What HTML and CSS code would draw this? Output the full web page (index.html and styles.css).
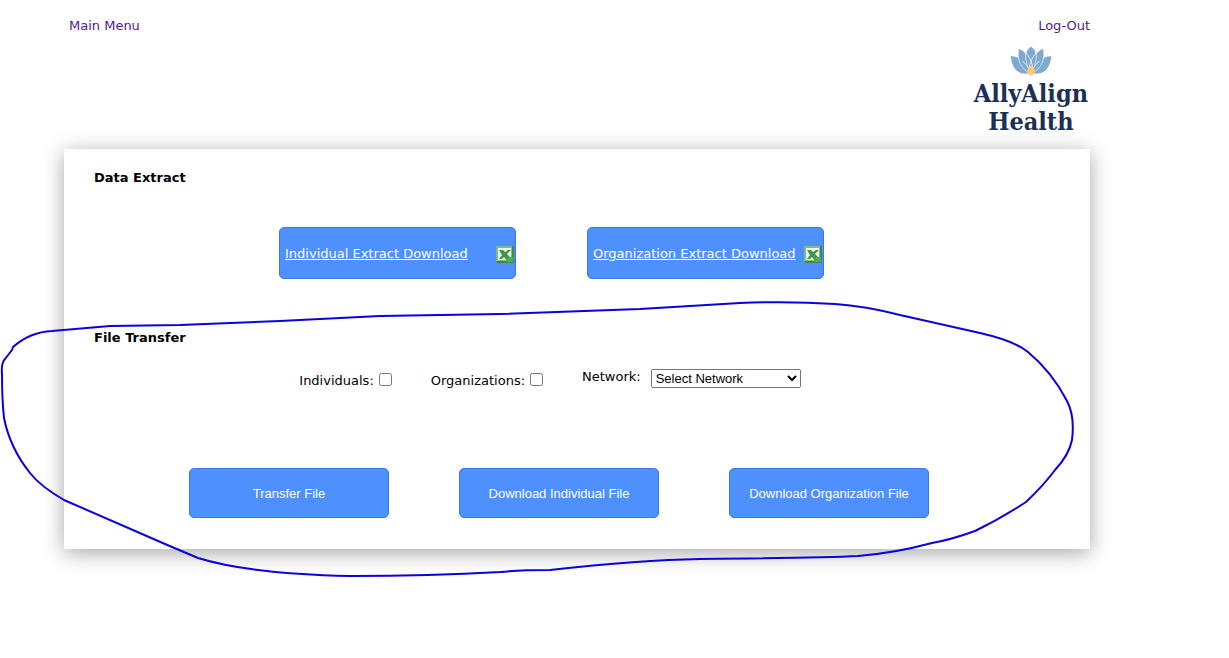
FILE: index.html
```html
<!DOCTYPE html>
<html lang="en">
<head>
<meta charset="utf-8">
<title>Data Extract</title>
<link rel="stylesheet" href="styles.css">
</head>
<body>
<div class="page">
  <header class="header">
    <a class="nav-link" href="#">Main Menu</a>
    <div class="account">
      <a class="nav-link" href="#">Log-Out</a>
      <div class="logo">
        <svg class="lotus" viewBox="0 0 40 28" aria-hidden="true">
          <g fill="#7fa9cf" stroke="#fff" stroke-width="0.6">
            <path d="M0 9Q9 9 14 16Q18 21 19 26Q9 28 4 21Q1 16 0 9Z"/>
            <path d="M40 9Q31 9 26 16Q22 21 21 26Q31 28 36 21Q39 16 40 9Z"/>
            <path d="M8 2Q15 4 18 12Q20 19 19 26Q12 22 9 15Q7 9 8 2Z"/>
            <path d="M32 2Q25 4 22 12Q20 19 21 26Q28 22 31 15Q33 9 32 2Z"/>
            <path d="M20 0Q26 4 25 12Q24 20 20 25Q16 20 15 12Q14 4 20 0Z"/>
          </g>
          <path d="M14 5Q21 12 22 23M26 5Q19 12 18 23M12 14Q17 18 19 24M28 14Q23 18 21 24" fill="none" stroke="#fff" stroke-width="0.7"/>
          <path d="M20 18Q25 22 23 26Q20 30 17 26Q15 22 20 18Z" fill="#fbcb75"/>
        </svg>
        <span>AllyAlign</span>
        <span>Health</span>
      </div>
    </div>
  </header>

  <main class="card">
    <section>
      <h2 class="title">Data Extract</h2>
      <div class="extracts">
        <a class="tile extract" href="#"><span>Individual Extract Download</span>
          <svg class="excel" viewBox="0 0 18 18" aria-hidden="true"><use href="#excel"/></svg></a>
        <a class="tile extract" href="#"><span>Organization Extract Download</span>
          <svg class="excel" viewBox="0 0 18 18" aria-hidden="true"><use href="#excel"/></svg></a>
      </div>
    </section>
    <section>
      <h2 class="title">File Transfer</h2>
      <form class="transfer">
        <div class="options">
          <div class="choice"><label for="ind">Individuals:</label><input class="check" type="checkbox" id="ind"></div>
          <div class="choice"><label for="org">Organizations:</label><input class="check" type="checkbox" id="org"></div>
          <div class="network"><label for="net">Network:</label><select class="select" id="net"><option>Select Network</option></select></div>
        </div>
        <div class="actions">
          <button class="tile action" type="button">Transfer File</button>
          <button class="tile action" type="button">Download Individual File</button>
          <button class="tile action" type="button">Download Organization File</button>
        </div>
      </form>
    </section>
  </main>
</div>

<svg class="markup" width="1229" height="658" viewBox="0 0 1229 658" aria-hidden="true">
  <path d="M2 375Q1 363 5 359L12 350L13 347Q30 332 52 331L110 326L180 325L280 321L380 316L500 314L640 309L740 303Q790 301 835 304Q865 306 900 315L980 333Q1015 341 1028 352Q1052 372 1067 401Q1075 416 1072 440Q1069 455 1055 470Q1043 486 1026 502Q1000 519 975 531Q950 540 932 543Q895 553 858 556Q820 558 700 559Q640 560 550 570Q520 570 500 572Q430 576 350 576Q250 574 198 558L165 544L64 500Q40 486 30 473Q10 448 4 418Q2 400 2 373"/>
</svg>

<svg class="symbols" aria-hidden="true">
  <symbol id="excel" viewBox="0 0 18 18">
    <path d="M0 1H18V18H1Z" fill="#3d8752"/>
    <path d="M0 1H16V16H0Z" fill="#86b886"/>
    <path d="M2 3H15V15H2Z" fill="#f4faed"/>
    <path d="M3 5H7L9 7L12 5H15L11 9L15 13V16H11L8 12L6 14H3L6 10Z" fill="#3c974b"/>
    <path d="M12 12H17V17H10Z" fill="#5aa560"/>
  </symbol>
</svg>
</body>
</html>
```
FILE: styles.css
```css
* { box-sizing: border-box; }
body {
  margin: 0;
  background: #fff;
  color: #000;
  font: 13px/16px Verdana, "DejaVu Sans", sans-serif;
}
.page { min-height: 100vh; padding: 18px 139px 60px 64px; }
.header {
  display: flex;
  justify-content: space-between;
  align-items: flex-start;
  padding-left: 5px;
  height: 131px;
}
.nav-link { color: #551a8b; text-decoration: none; }
.account { display: flex; flex-direction: column; align-items: flex-end; gap: 12px; }
.logo {
  display: flex;
  flex-direction: column;
  align-items: center;
  padding-right: 2px;
  color: #1b2f57;
  font: bold 25px/28px "DejaVu Serif Condensed", "DejaVu Serif", serif;
  font-stretch: condensed;
}
.lotus { width: 42px; height: 30px; margin-bottom: 4px; }
.card {
  display: flex;
  flex-direction: column;
  gap: 50px;
  padding: 20px 30px 31px;
  background: #fff;
  box-shadow: 0 4px 20px rgba(0, 0, 0, 0.35);
}
.title { margin: 0; font-size: 13px; line-height: 18px; }
.tile {
  display: flex;
  align-items: center;
  border: 1px solid #3b78d8;
  border-radius: 5px;
  background: #4d90fe;
  color: #fff;
}
.extracts {
  display: flex;
  justify-content: center;
  gap: 71px;
  padding: 40px 51px 0 0;
}
.extract {
  justify-content: space-between;
  width: 237px;
  height: 52px;
  padding: 1px 1px 0 5px;
}
.excel { width: 18px; height: 18px; flex: none; }
.options {
  display: flex;
  justify-content: center;
  gap: 39px;
  padding: 22px 54px 0 0;
}
.choice { display: flex; gap: 5px; padding-top: 4px; }
.check { width: 13px; height: 13px; margin: 0; }
.network { display: flex; gap: 10px; }
.select { width: 150px; height: 19px; font: 13px "Liberation Sans", sans-serif; }
.actions {
  display: flex;
  justify-content: center;
  gap: 70px;
  padding: 79px 36px 0 0;
}
.action {
  justify-content: center;
  width: 200px;
  height: 50px;
  padding: 0;
  font: 13px "Liberation Sans", sans-serif;
}
.markup { position: absolute; top: 0; left: 0; pointer-events: none; }
.markup path { fill: none; stroke: #0b00e0; stroke-width: 2; stroke-linejoin: round; }
.symbols { display: none; }
```
